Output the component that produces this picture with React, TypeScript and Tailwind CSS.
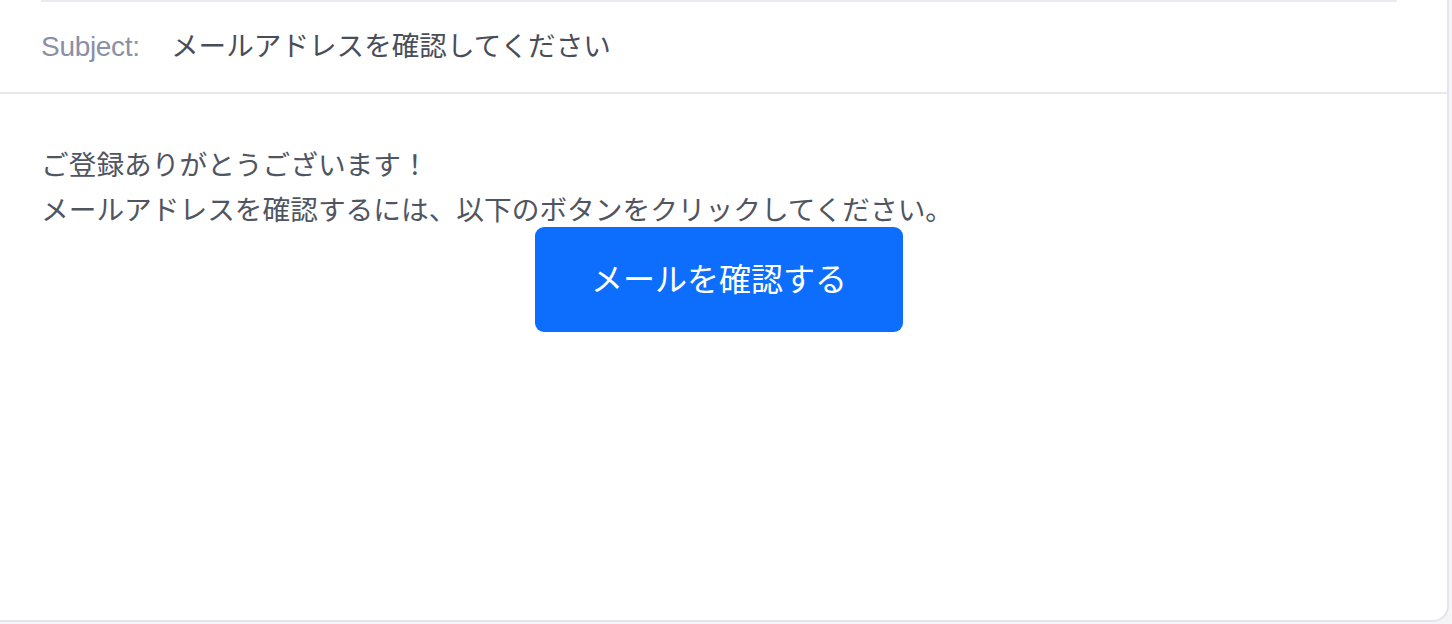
import React from "react";

export default function App() {
  return (
    <div
      className="h-[624px] w-[1452px] overflow-hidden bg-[#f5f5f8]"
      style={{ fontFamily: "'Liberation Sans', 'Noto Sans CJK JP', sans-serif" }}
    >
      <div className="flex h-[622px] w-[1449px] flex-col rounded-br-[16px] border-r-2 border-b-2 border-[#e4e3ee] bg-white">
        <div className="mx-[41px] h-[2px] w-[1356px] bg-[#e9e9ef]" />
        <div className="flex h-[92px] items-center border-b-2 border-[#e8e8ee] px-[41px]">
          <span className="w-[130px] text-[28px] tracking-[-0.3px] text-[#8a90a5]">Subject:</span>
          <span className="text-[27.6px] text-[#484d5a]">メールアドレスを確認してください</span>
        </div>
        <div className="flex flex-col px-[41px] pt-[48.5px]">
          <div className="w-[1356px] text-[27.7px] leading-[45px] text-[#505562]">
            <div>ご登録ありがとうございます！</div>
            <div>メールアドレスを確認するには、以下のボタンをクリックしてください。</div>
          </div>
          <div className="-mt-[5.5px] flex w-[1356px] justify-center">
            <div className="flex h-[105px] w-[368px] items-center justify-center rounded-[9px] bg-[#0d6efd] text-[32px] text-white">
              メールを確認する
            </div>
          </div>
        </div>
      </div>
    </div>
  );
}
